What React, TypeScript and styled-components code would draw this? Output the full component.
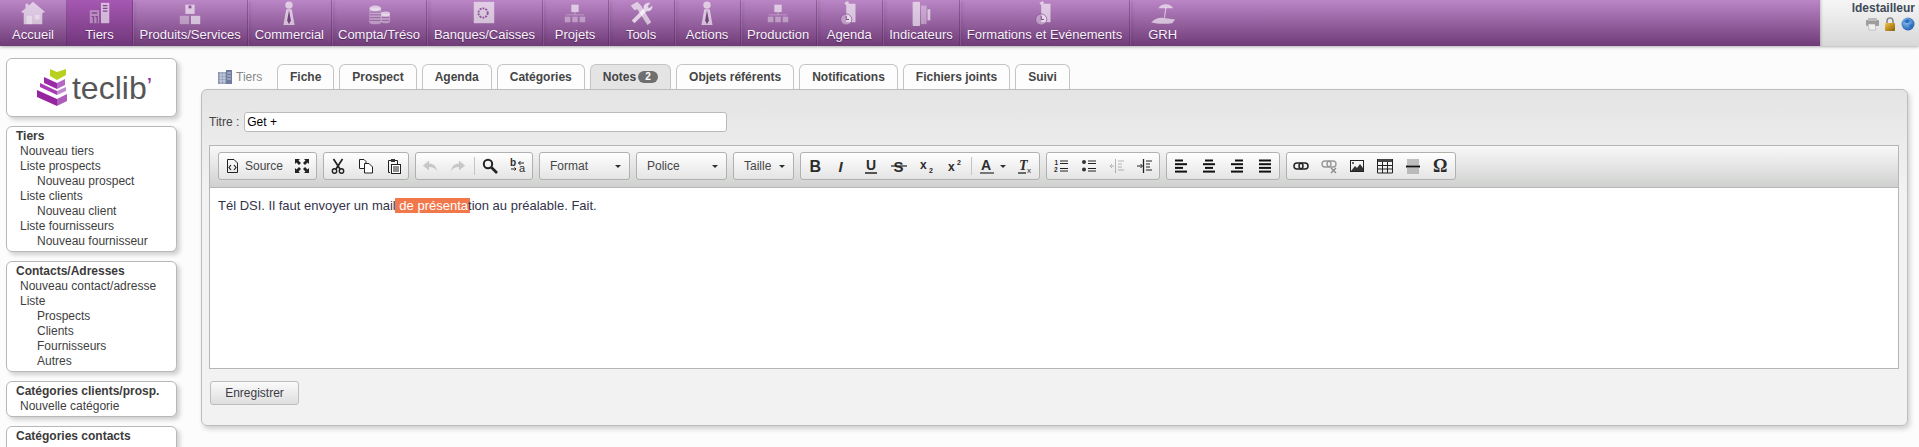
import React from 'react';
import styled, { createGlobalStyle } from 'styled-components';

const GlobalStyle = createGlobalStyle`
  html, body {
    margin: 0;
    height: 100%;
    overflow: hidden;
    background: #fcfcfc;
    font-family: "Liberation Sans", Arial, sans-serif;
    font-size: 12px;
    color: #444;
  }
`;

const Page = styled.div`
  height: 447px;
  overflow: hidden;
`;

/* top bar */
const TopBar = styled.header`
  display: flex;
  height: 46px;
  box-shadow: 0 1px 3px rgba(0, 0, 0, 0.3);
  position: relative;
`;

const NavMenu = styled.nav`
  flex: 1;
  display: flex;
  background: linear-gradient(#bb86c6, #6f3c78);
`;

const NavItem = styled.a<{ $active?: boolean }>`
  box-sizing: border-box;
  min-width: 66px;
  padding: 0 6.5px;
  display: flex;
  flex-direction: column;
  align-items: center;
  color: #f8f2f9;
  font-size: 13px;
  line-height: 15px;
  text-shadow: 0 1px 1px rgba(50, 10, 60, 0.6);
  border-right: 1px solid rgba(70, 30, 80, 0.35);
  box-shadow: 1px 0 0 rgba(255, 255, 255, 0.12), 3px 0 3px -1px rgba(70, 30, 80, 0.15);
  background: ${props =>
    props.$active ? 'linear-gradient(#a658b2, #70367a)' : 'transparent'};
  &:first-child {
    min-width: 67px;
  }
  &:last-child {
    border-right: 0;
    box-shadow: none;
  }
  svg {
    width: 26px;
    height: 26px;
    margin-bottom: 1px;
  }
`;

const LoginBlock = styled.div`
  box-sizing: border-box;
  width: 99px;
  padding: 2px 4px 0 0;
  text-align: right;
  background: linear-gradient(#f6f6f6, #d8d8d8);
  box-shadow: inset 3px 0 3px -2px rgba(0, 0, 0, 0.2);
`;

const LoginName = styled.div`
  font-weight: bold;
  line-height: 13px;
  color: #3f4a58;
`;

const LoginIcons = styled.div`
  display: flex;
  justify-content: flex-end;
  gap: 5px;
  margin-top: 2px;
`;

/* body */
const Content = styled.div`
  display: flex;
  align-items: flex-start;
`;

const Sidebar = styled.aside`
  flex: 0 0 171px;
  margin: 12px 0 0 6px;
  display: flex;
  flex-direction: column;
  gap: 9px;
`;

const SideBox = styled.div`
  box-sizing: border-box;
  min-height: 36px;
  padding: 2px 0;
  background: #fff;
  border: 1px solid #b8b8b8;
  border-radius: 6px;
  box-shadow: 3px 3px 4px #d0d0d0;
`;

const LogoBox = styled(SideBox)`
  height: 59px;
  display: flex;
  align-items: center;
  justify-content: center;
  padding: 0 0 0 5px;
`;

const LogoText = styled.span`
  font-size: 32px;
  line-height: 34px;
  color: #565656;
  margin-left: 4px;
  em {
    font-style: normal;
    color: #8e2a9c;
    vertical-align: 4px;
    font-size: 24px;
  }
`;

const MenuTitle = styled.div`
  font-weight: bold;
  line-height: 15px;
  padding-left: 9px;
  color: #3b3b3b;
`;

const MenuLink = styled.div<{ $sub?: boolean }>`
  line-height: 15px;
  padding-left: ${props => (props.$sub ? '30px' : '13px')};
  color: #3e3e3e;
  white-space: nowrap;
`;

const Main = styled.main`
  flex: 1;
  min-width: 0;
  margin: 18px 11px 0 24px;
`;

const TabBar = styled.div`
  display: flex;
  gap: 5px;
  height: 25px;
  padding-left: 16px;
`;

const TabHeading = styled.div`
  box-sizing: border-box;
  width: 55px;
  display: flex;
  align-items: center;
  gap: 3px;
  color: #888;
`;

const Tab = styled.div<{ $active?: boolean }>`
  box-sizing: border-box;
  height: 25px;
  padding: 0 12px;
  display: flex;
  align-items: center;
  gap: 2px;
  font-weight: bold;
  color: #454545;
  white-space: nowrap;
  background: ${props => (props.$active ? '#e4e4e4' : '#fdfdfd')};
  border: 1px solid #c4c4c4;
  border-bottom: 0;
  border-radius: 6px 6px 0 0;
`;

const Badge = styled.span`
  width: 20px;
  height: 12px;
  border-radius: 6px;
  background: #6f6f6f;
  color: #fff;
  font-size: 10px;
  line-height: 12px;
  text-align: center;
`;

const Panel = styled.section`
  box-sizing: border-box;
  height: 337px;
  padding: 22px 8px 0 7px;
  background: linear-gradient(#e4e4e4, #f2f2f2 30%);
  border: 1px solid #bdbdbd;
  border-radius: 6px;
  box-shadow: 2px 3px 5px #cfcfcf;
`;

const TitleRow = styled.div`
  display: flex;
  align-items: center;
  gap: 5px;
  height: 20px;
`;

const TitleInput = styled.div`
  box-sizing: border-box;
  width: 483px;
  height: 20px;
  padding-left: 2px;
  line-height: 18px;
  color: #000;
  background: #fff;
  border: 1px solid #bbb;
  border-radius: 3px;
`;

const Editor = styled.div`
  box-sizing: border-box;
  height: 224px;
  margin-top: 13px;
  border: 1px solid #b6b6b6;
  background: #fff;
`;

const Toolbar = styled.div`
  box-sizing: border-box;
  height: 42px;
  padding: 6px 8px;
  display: flex;
  gap: 6px;
  background: linear-gradient(#f8f8f8, #cfd1cf);
  border-bottom: 1px solid #b6b6b6;
`;

const Group = styled.div`
  box-sizing: border-box;
  height: 28px;
  padding: 0;
  display: flex;
  align-items: center;
  border: 1px solid #b0b0b0;
  border-radius: 3px;
  background: linear-gradient(#fff, #e4e4e4);
`;

const Btn = styled.span<{ $width?: number; $muted?: boolean }>`
  box-sizing: border-box;
  width: ${props => props.$width ?? 28}px;
  height: 26px;
  display: flex;
  align-items: center;
  justify-content: center;
  gap: 5px;
  color: #474747;
  flex: none;
  opacity: ${props => (props.$muted ? 0.3 : 1)};
`;

const Divider = styled.span`
  width: 1px;
  height: 18px;
  background: #c4c4c4;
  margin: 0 1px 0 2px;
  flex: none;
`;

const Combo = styled(Group)<{ $width: number }>`
  width: ${props => props.$width}px;
  padding: 0 8px 0 10px;
  justify-content: space-between;
  color: #474747;
`;

const Caret = styled.span`
  width: 0;
  height: 0;
  border: 3px solid transparent;
  border-top-color: #2f2f2f;
  border-bottom: 0;
`;

const EditorBody = styled.div`
  padding: 10px 8px;
  font-size: 13px;
  line-height: 15px;
  color: #33334a;
`;

const Highlight = styled.span`
  background: #f0784a;
  color: #fff;
  padding: 0 2px 0 1px;
  margin: 0 -2px 0 -1px;
`;

const SaveButton = styled.button`
  display: block;
  box-sizing: border-box;
  width: 89px;
  height: 24px;
  margin: 12px 0 0 1px;
  padding: 0;
  font: 12px "Liberation Sans", Arial, sans-serif;
  color: #3b3b45;
  background: linear-gradient(#fafafa, #dedede);
  border: 1px solid #bdbdbd;
  border-radius: 3px;
`;

/* top menu drawings */
const NAV_FILL = 'rgba(255,255,255,0.6)';
const NAV_SOFT = 'rgba(255,255,255,0.36)';

const NavHome = () => (
  <svg viewBox="0 0 28 28">
    <path d="M14 2 L27 13 L24 14 L24 26 L4 26 L4 14 L1 13 L6 9 V4 H9 V6.5 Z" fill={NAV_FILL} />
    <rect x="7" y="17" width="6" height="9" fill={NAV_SOFT} />
    <rect x="16" y="16" width="5" height="5" fill={NAV_SOFT} />
  </svg>
);
const NavTiers = () => (
  <svg viewBox="0 0 28 28">
    <rect x="15" y="3" width="9" height="22" fill={NAV_FILL} />
    <rect x="3" y="11" width="10" height="14" fill={NAV_SOFT} />
    <path d="M17 6h5M17 9h5M17 12h5M5 14h6M5 18h2v7M9 18h2v7" stroke="#7f4a8b" strokeWidth="1.4" fill="none" />
  </svg>
);
const NavBoxes = () => (
  <svg viewBox="0 0 28 28">
    <rect x="9" y="5" width="10" height="10" fill={NAV_FILL} />
    <rect x="3" y="17" width="10" height="9" fill={NAV_SOFT} />
    <rect x="15" y="17" width="10" height="9" fill={NAV_FILL} />
    <rect x="12.5" y="6" width="3" height="3" fill="#8a5496" />
  </svg>
);
const NavPerson = () => (
  <svg viewBox="0 0 28 28">
    <circle cx="14" cy="5.5" r="4" fill={NAV_FILL} />
    <path d="M11 10 H17 L20 27 H8 Z" fill={NAV_FILL} />
    <path d="M14 11 L16 22 L14 26 L12 22 Z" fill="#6f4279" />
  </svg>
);
const NavCoins = () => (
  <svg viewBox="0 0 28 28">
    <ellipse cx="10" cy="9" rx="6.5" ry="3" fill={NAV_FILL} />
    <rect x="3.5" y="9" width="13" height="17" rx="3" fill={NAV_SOFT} />
    <path d="M4 13h12M4 16h12M4 19h12M4 22h12" stroke="#8a5496" strokeWidth="0.8" />
    <ellipse cx="21" cy="15" rx="5" ry="2.5" fill={NAV_FILL} />
    <rect x="16" y="15" width="10" height="10" rx="3" fill={NAV_SOFT} />
    <path d="M17 19h8M17 22h8" stroke="#8a5496" strokeWidth="0.8" />
  </svg>
);
const NavSafe = () => (
  <svg viewBox="0 0 28 28">
    <rect x="3" y="2" width="22" height="23" fill={NAV_FILL} />
    <circle cx="13" cy="14" r="5" fill="none" stroke="#8a5496" strokeWidth="2" strokeDasharray="2 1.2" />
  </svg>
);
const NavOrg = () => (
  <svg viewBox="0 0 28 28">
    <rect x="10" y="5" width="8" height="8" fill={NAV_FILL} />
    <path d="M13.5 13h1v3h-1zM4 15.5h20v1H4z" fill={NAV_SOFT} />
    <rect x="3" y="18" width="6" height="6" fill={NAV_SOFT} />
    <rect x="11" y="18" width="6" height="6" fill={NAV_SOFT} />
    <rect x="19" y="18" width="6" height="6" fill={NAV_SOFT} />
  </svg>
);
const NavTools = () => (
  <svg viewBox="0 0 28 28">
    <path d="M3 6 L10 2 L14 6 L25 24 L21 27 L10 10 L7 11 Z" fill={NAV_FILL} />
    <path d="M24 3 L21 7 L23 9 L26 6 C27 10 24 13 20 12 L7 25 L4 22 L17 9 C16 6 19 2 24 3 Z" fill="rgba(255,255,255,0.7)" />
  </svg>
);
const NavAgenda = () => (
  <svg viewBox="0 0 28 28">
    <path d="M9 3 L13 1 L14 4 L21 4 V24 H11 V6 Z" fill={NAV_FILL} />
    <circle cx="11" cy="21" r="6" fill={NAV_SOFT} stroke="#8a5496" strokeWidth="0.8" />
    <path d="M11 17v4h3" stroke="#744080" fill="none" />
  </svg>
);
const NavStats = () => (
  <svg viewBox="0 0 28 28">
    <rect x="5" y="2" width="8" height="26" rx="1" fill={NAV_FILL} />
    <rect x="14" y="6" width="6" height="20" fill={NAV_SOFT} />
    <rect x="21" y="10" width="3" height="12" fill={NAV_FILL} />
  </svg>
);
const NavBeach = () => (
  <svg viewBox="0 0 28 28">
    <path d="M9 9 C12 3 22 3 25 9 Z" fill={NAV_FILL} />
    <path d="M16.5 8h1.2l-1.5 11h-1.2z" fill={NAV_FILL} />
    <path d="M1 24 C6 20 8 19 13 19 L27 21 L24 25 C16 26 8 26 1 24 Z" fill={NAV_FILL} />
  </svg>
);

const navItems: { label: string; icon: React.ReactNode; active?: boolean }[] = [
  { label: 'Accueil', icon: <NavHome /> },
  { label: 'Tiers', icon: <NavTiers />, active: true },
  { label: 'Produits/Services', icon: <NavBoxes /> },
  { label: 'Commercial', icon: <NavPerson /> },
  { label: 'Compta/Tréso', icon: <NavCoins /> },
  { label: 'Banques/Caisses', icon: <NavSafe /> },
  { label: 'Projets', icon: <NavOrg /> },
  { label: 'Tools', icon: <NavTools /> },
  { label: 'Actions', icon: <NavPerson /> },
  { label: 'Production', icon: <NavOrg /> },
  { label: 'Agenda', icon: <NavAgenda /> },
  { label: 'Indicateurs', icon: <NavStats /> },
  { label: 'Formations et Evénements', icon: <NavAgenda /> },
  { label: 'GRH', icon: <NavBeach /> },
];

/* login icons */
const PrinterIcon = () => (
  <svg width="13" height="14" viewBox="0 0 13 14">
    <rect x="0" y="3" width="13" height="6" rx="1" fill="#9c9c9c" />
    <rect x="2" y="1" width="9" height="3" fill="#bbb" />
    <path d="M2 7h7l1 6H3z" fill="#f0f0f0" stroke="#aaa" strokeWidth="0.6" />
  </svg>
);
const LockIcon = () => (
  <svg width="12" height="14" viewBox="0 0 12 14">
    <defs>
      <linearGradient id="lockGold" x1="0" x2="1" y1="0" y2="1">
        <stop offset="0" stopColor="#f5c542" />
        <stop offset="1" stopColor="#8a5a08" />
      </linearGradient>
    </defs>
    <path d="M3 6V4a3 3 0 0 1 6 0v2" fill="none" stroke="#888" strokeWidth="1.6" />
    <rect x="1" y="6" width="10" height="8" rx="1" fill="url(#lockGold)" />
  </svg>
);
const GlobeIcon = () => (
  <svg width="14" height="14" viewBox="0 0 14 14">
    <defs>
      <radialGradient id="globeBlue" cx="0.4" cy="0.35" r="0.7">
        <stop offset="0" stopColor="#8fc3f0" />
        <stop offset="1" stopColor="#1b5cb0" />
      </radialGradient>
    </defs>
    <circle cx="7" cy="7" r="6.5" fill="url(#globeBlue)" />
    <path d="M3 4 L7 2 L9 4 L7 6 L5 6 Z M8 8 L12 7 L10 12 Z" fill="#2a6fc2" />
  </svg>
);
const TiersIcon = () => (
  <svg width="16" height="16" viewBox="0 0 16 16">
    <rect x="1" y="3" width="9" height="12" fill="#8c97b4" />
    <rect x="9" y="1" width="6" height="14" fill="#6f7c9e" />
    <path d="M2 6h7M2 9h7M2 12h7M10 4h4M10 7h4M10 10h4M4 3v12M7 3v12" stroke="#d7dbe6" strokeWidth="0.8" />
  </svg>
);

/* logo */
const LogoMark = () => (
  <svg width="32" height="40" viewBox="4 6 32 40">
    <path d="M18 7 L25 10 L34 7 V13 L25 18 L18 14 Z" fill="#b8d020" />
    <path d="M12 15 L25 21 V27 L12 21 Z" fill="#9a2aa8" />
    <path d="M25 21 L33 17 V23 L25 27 Z" fill="#b468c4" />
    <path d="M8 21 L25 29 V33 L8 25 Z" fill="#a83ab6" />
    <path d="M25 29 L34 25 V29 L25 33 Z" fill="#c288d0" />
    <path d="M5 28 L25 37 V44 L5 35 Z" fill="#96249f" />
    <path d="M25 37 L35 32 V39 L25 44 Z" fill="#ad5cbc" />
  </svg>
);

/* toolbar drawings */
const Ink: React.FC<{ children: React.ReactNode; size?: number }> = ({ children, size = 16 }) => (
  <svg width={size} height={size} viewBox={`0 0 ${size} ${size}`} fill="none" stroke="#222" strokeWidth="1">
    {children}
  </svg>
);

const SourceIcon = () => (
  <Ink>
    <path d="M3.5 1.5H10L13.5 5V14.5H3.5Z" />
    <path d="M7 7L5 9.5L7 12M10 7L12 9.5L10 12" strokeWidth="1.2" />
  </Ink>
);
const MaximizeIcon = () => (
  <Ink>
    <path d="M1 1h5L4.5 2.5 7 5 5 7 2.5 4.5 1 6ZM15 1v5L13.5 4.5 11 7 9 5l2.5-2.5L10 1ZM1 15v-5l1.5 1.5L5 9l2 2-2.5 2.5L6 15ZM15 15h-5l1.5-1.5L9 11l2-2 2.5 2.5L15 10Z" fill="#222" stroke="none" />
  </Ink>
);
const CutIcon = () => (
  <Ink>
    <path d="M3.5 1L10 11M12.5 1L6 11" strokeWidth="1.7" />
    <circle cx="4.5" cy="13" r="2.2" strokeWidth="1.4" />
    <circle cx="11.5" cy="13" r="2.2" strokeWidth="1.4" />
  </Ink>
);
const CopyIcon = () => (
  <Ink>
    <path d="M1.5 1.5H6L8 3.5V10.5H1.5Z" fill="#fff" />
    <path d="M6.5 5.5H11L14.5 9V15H6.5Z" fill="#fff" />
  </Ink>
);
const PasteIcon = () => (
  <Ink>
    <path d="M2.5 2.5H11.5V6M4 14.5H2.5V2.5" />
    <rect x="5" y="1" width="4" height="3" fill="#333" stroke="none" />
    <rect x="5.5" y="6.5" width="9" height="9" fill="#fff" />
    <path d="M7 9h6M7 11h6M7 13h6" />
  </Ink>
);
const UndoIcon = () => (
  <Ink>
    <path d="M1 7.5L7 2.5V5.5C11 5.5 14 7.5 15 13C13 10 11 9 7 9V12.5Z" fill="#666" stroke="none" />
  </Ink>
);
const RedoIcon = () => (
  <Ink>
    <path d="M15 7.5L9 2.5V5.5C5 5.5 2 7.5 1 13C3 10 5 9 9 9V12.5Z" fill="#666" stroke="none" />
  </Ink>
);
const FindIcon = () => (
  <Ink>
    <circle cx="6" cy="6" r="4.2" strokeWidth="2" />
    <path d="M9.5 9.5L15 15" strokeWidth="2.6" />
  </Ink>
);
const GlyphText = styled.text<{ $serif?: boolean; $italic?: boolean; $bold?: boolean }>`
  font-family: ${props => (props.$serif ? '"Liberation Serif"' : '"Liberation Sans"')}, serif;
  font-weight: ${props => (props.$bold ? 'bold' : 'normal')};
  font-style: ${props => (props.$italic ? 'italic' : 'normal')};
  fill: #2c2c2c;
  stroke: none;
`;
const ReplaceIcon = () => (
  <Ink>
    <GlyphText x="0" y="8" fontSize="10" $bold>b</GlyphText>
    <GlyphText x="9" y="13.5" fontSize="11">a</GlyphText>
    <path d="M14 5H8.5M10.5 3L8.5 5L10.5 7M1 11H6M4.5 9.5L6 11L4.5 12.5" />
  </Ink>
);
const BoldIcon = () => (
  <Ink><GlyphText x="2.5" y="14" fontSize="16" $bold>B</GlyphText></Ink>
);
const ItalicIcon = () => (
  <Ink><GlyphText x="3.5" y="14" fontSize="15" $bold $italic>I</GlyphText></Ink>
);
const UnderlineIcon = () => (
  <Ink>
    <GlyphText x="3" y="12" fontSize="14" $bold>U</GlyphText>
    <path d="M2 15h12" strokeWidth="1.5" />
  </Ink>
);
const StrikeIcon = () => (
  <Ink>
    <GlyphText x="2.5" y="14" fontSize="15" $bold>S</GlyphText>
    <path d="M0 8h16" strokeWidth="1.2" />
  </Ink>
);
const SubIcon = () => (
  <Ink>
    <GlyphText x="1" y="11" fontSize="12" $bold>x</GlyphText>
    <GlyphText x="10" y="15" fontSize="7" $bold>2</GlyphText>
  </Ink>
);
const SupIcon = () => (
  <Ink>
    <GlyphText x="1" y="13" fontSize="12" $bold>x</GlyphText>
    <GlyphText x="10" y="7" fontSize="7" $bold>2</GlyphText>
  </Ink>
);
const ColorIcon = () => (
  <Ink>
    <GlyphText x="2" y="12" fontSize="14" $bold>A</GlyphText>
    <path d="M1 15h14" strokeWidth="2" stroke="#777" />
  </Ink>
);
const ClearIcon = () => (
  <Ink>
    <GlyphText x="2" y="12" fontSize="14" $serif $bold $italic>T</GlyphText>
    <GlyphText x="10" y="15" fontSize="8">x</GlyphText>
    <path d="M1 15h8" strokeWidth="1.3" />
  </Ink>
);
const NumberedIcon = () => (
  <Ink>
    <GlyphText x="1.5" y="6.5" fontSize="6.5" $bold>1</GlyphText>
    <GlyphText x="1" y="14" fontSize="6.5" $bold>2</GlyphText>
    <path d="M7 3h8M7 5.5h8M7 10.5h8M7 13h8" />
  </Ink>
);
const BulletIcon = () => (
  <Ink>
    <circle cx="3" cy="4" r="2" fill="#333" stroke="none" />
    <circle cx="3" cy="11.5" r="2" fill="#333" stroke="none" />
    <path d="M7 3h8M7 5.5h8M7 10.5h8M7 13h8" />
  </Ink>
);
const OutdentIcon = () => (
  <Ink>
    <path d="M6.5 1v14M9 3h6M9 6h4M9 9h4M9 12h6M1 8h4M3 6L1 8l2 2" />
  </Ink>
);
const IndentIcon = () => (
  <Ink>
    <path d="M6.5 1v14" strokeWidth="1.3" />
    <path d="M9 3h6M9 6h4M9 9h4M9 12h6M0 8h5M3.5 6l2 2-2 2" />
  </Ink>
);
const AlignIcon: React.FC<{ rows: [number, number][] }> = ({ rows }) => (
  <Ink>
    {rows.map(([start, end], i) => (
      <path key={i} d={`M${start} ${2.5 + i * 3.7}H${end}`} stroke="#111" strokeWidth="2" />
    ))}
  </Ink>
);
const LinkIcon = () => (
  <Ink>
    <rect x="1" y="5" width="9" height="6" rx="3" strokeWidth="1.5" />
    <rect x="6" y="5" width="9" height="6" rx="3" strokeWidth="1.5" />
  </Ink>
);
const UnlinkIcon = () => (
  <Ink>
    <rect x="1" y="3" width="9" height="6" rx="3" strokeWidth="1.4" stroke="#999" />
    <rect x="6" y="3" width="9" height="6" rx="3" strokeWidth="1.4" stroke="#999" />
    <path d="M10 10l5 5M15 10l-5 5" stroke="#888" strokeWidth="1.3" />
  </Ink>
);
const ImageIcon = () => (
  <Ink>
    <rect x="1.5" y="2.5" width="13" height="11" />
    <circle cx="4" cy="5" r="1" fill="#333" stroke="none" />
    <path d="M2 13L6 8L8 10L11 6L14 10V13Z" fill="#333" stroke="none" />
  </Ink>
);
const TableIcon = () => (
  <Ink>
    <rect x="0" y="1" width="16" height="3" fill="#444" stroke="none" />
    <path d="M.5 1v14h15V1M.5 7.5h15M.5 11h15M5.5 4v11M10.5 4v11" />
  </Ink>
);
const RuleIcon = () => (
  <Ink>
    <path d="M2 2h12M2 4h12M2 6h12M2 11h12M2 13h12M2 15h12" stroke="#888" />
    <path d="M1 8.5h14" stroke="#111" strokeWidth="2" />
  </Ink>
);
const OmegaIcon = () => (
  <Ink size={20}><GlyphText x="2" y="16" fontSize="18" $serif $bold>Ω</GlyphText></Ink>
);

const App: React.FC = () => (
  <Page>
    <GlobalStyle />
    <TopBar>
      <NavMenu>
        {navItems.map(item => (
          <NavItem key={item.label} $active={item.active}>
            {item.icon}
            {item.label}
          </NavItem>
        ))}
      </NavMenu>
      <LoginBlock>
        <LoginName>ldestailleur</LoginName>
        <LoginIcons>
          <PrinterIcon />
          <LockIcon />
          <GlobeIcon />
        </LoginIcons>
      </LoginBlock>
    </TopBar>

    <Content>
      <Sidebar>
        <LogoBox>
          <LogoMark />
          <LogoText>teclib<em>’</em></LogoText>
        </LogoBox>
        <SideBox>
          <MenuTitle>Tiers</MenuTitle>
          <MenuLink>Nouveau tiers</MenuLink>
          <MenuLink>Liste prospects</MenuLink>
          <MenuLink $sub>Nouveau prospect</MenuLink>
          <MenuLink>Liste clients</MenuLink>
          <MenuLink $sub>Nouveau client</MenuLink>
          <MenuLink>Liste fournisseurs</MenuLink>
          <MenuLink $sub>Nouveau fournisseur</MenuLink>
        </SideBox>
        <SideBox>
          <MenuTitle>Contacts/Adresses</MenuTitle>
          <MenuLink>Nouveau contact/adresse</MenuLink>
          <MenuLink>Liste</MenuLink>
          <MenuLink $sub>Prospects</MenuLink>
          <MenuLink $sub>Clients</MenuLink>
          <MenuLink $sub>Fournisseurs</MenuLink>
          <MenuLink $sub>Autres</MenuLink>
        </SideBox>
        <SideBox>
          <MenuTitle>Catégories clients/prosp.</MenuTitle>
          <MenuLink>Nouvelle catégorie</MenuLink>
        </SideBox>
        <SideBox>
          <MenuTitle>Catégories contacts</MenuTitle>
        </SideBox>
      </Sidebar>

      <Main>
        <TabBar>
          <TabHeading>
            <TiersIcon />
            Tiers
          </TabHeading>
          <Tab>Fiche</Tab>
          <Tab>Prospect</Tab>
          <Tab>Agenda</Tab>
          <Tab>Catégories</Tab>
          <Tab $active>
            Notes <Badge>2</Badge>
          </Tab>
          <Tab>Objets référents</Tab>
          <Tab>Notifications</Tab>
          <Tab>Fichiers joints</Tab>
          <Tab>Suivi</Tab>
        </TabBar>
        <Panel>
          <TitleRow>
            Titre :<TitleInput>Get +</TitleInput>
          </TitleRow>
          <Editor>
            <Toolbar>
              <Group>
                <Btn $width={69}>
                  <SourceIcon />
                  Source
                </Btn>
                <Btn><MaximizeIcon /></Btn>
              </Group>
              <Group>
                <Btn><CutIcon /></Btn>
                <Btn><CopyIcon /></Btn>
                <Btn><PasteIcon /></Btn>
              </Group>
              <Group>
                <Btn $muted><UndoIcon /></Btn>
                <Btn $muted><RedoIcon /></Btn>
                <Divider />
                <Btn><FindIcon /></Btn>
                <Btn><ReplaceIcon /></Btn>
              </Group>
              <Combo $width={91}>Format<Caret /></Combo>
              <Combo $width={91}>Police<Caret /></Combo>
              <Combo $width={61}>Taille<Caret /></Combo>
              <Group>
                <Btn><BoldIcon /></Btn>
                <Btn><ItalicIcon /></Btn>
                <Btn><UnderlineIcon /></Btn>
                <Btn><StrikeIcon /></Btn>
                <Btn><SubIcon /></Btn>
                <Btn><SupIcon /></Btn>
                <Divider />
                <Btn $width={38}><ColorIcon /><Caret /></Btn>
                <Btn><ClearIcon /></Btn>
              </Group>
              <Group>
                <Btn><NumberedIcon /></Btn>
                <Btn><BulletIcon /></Btn>
                <Btn $muted><OutdentIcon /></Btn>
                <Btn><IndentIcon /></Btn>
              </Group>
              <Group>
                <Btn><AlignIcon rows={[[2, 10], [2, 14], [2, 10], [2, 14]]} /></Btn>
                <Btn><AlignIcon rows={[[4, 12], [2, 14], [4, 12], [2, 14]]} /></Btn>
                <Btn><AlignIcon rows={[[6, 14], [2, 14], [6, 14], [2, 14]]} /></Btn>
                <Btn><AlignIcon rows={[[2, 14], [2, 14], [2, 14], [2, 14]]} /></Btn>
              </Group>
              <Group>
                <Btn><LinkIcon /></Btn>
                <Btn><UnlinkIcon /></Btn>
                <Btn><ImageIcon /></Btn>
                <Btn><TableIcon /></Btn>
                <Btn><RuleIcon /></Btn>
                <Btn><OmegaIcon /></Btn>
              </Group>
            </Toolbar>
            <EditorBody>
              Tél DSI. Il faut envoyer un mail<Highlight> de présenta</Highlight>tion au préalable. Fait.
            </EditorBody>
          </Editor>
          <SaveButton>Enregistrer</SaveButton>
        </Panel>
      </Main>
    </Content>
  </Page>
);

export default App;
